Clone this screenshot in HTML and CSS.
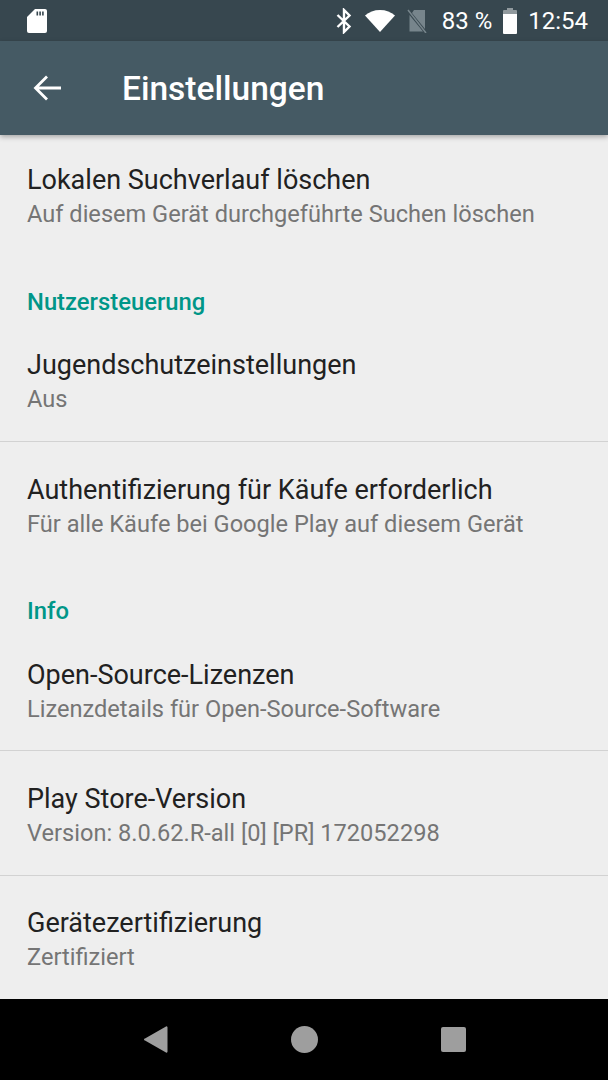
FILE: index.html
```html
<!DOCTYPE html>
<html lang="de">
<head>
  <meta charset="UTF-8" />
  <meta name="viewport" content="width=device-width, initial-scale=1.0"/>
  <title>Einstellungen</title>
  <link rel="stylesheet" href="styles.css">
</head>
<body>

  <div class="status-bar">
    <svg class="sd-icon" viewBox="0 0 20 24"><path fill="#fff" d="M8 0h10a2 2 0 0 1 2 2v20a2 2 0 0 1-2 2H2a2 2 0 0 1-2-2V8z"/><path fill="#37474f" d="M9.500 2.500h1.600v4H9.500zM12.300 2.500h1.600v4h-1.600zM15.100 2.500h1.600v4h-1.600z"/></svg>
    <div class="status-right">
      <svg class="bt-icon" viewBox="0 0 16 26"><path fill="none" stroke="#fff" stroke-width="2.400" d="M1.500 7l12 11.500L8 24V2l5.500 5.500L1.500 19"/></svg>
      <svg class="wifi-icon" viewBox="0 0 30 22"><path fill="#fff" d="M15 22L0 5.500C4 2 9 0 15 0s11 2 15 5.500z"/></svg>
      <svg class="sim-icon" viewBox="0 0 20 24"><path fill="#77858c" d="M7 1h11v19L5 4zM2.500 6L16 22.500H2.500z"/><path stroke="#77858c" stroke-width="1.500" d="M1 1l18 23"/></svg>
      <span class="battery-text">83 %</span>
      <svg class="battery-icon" viewBox="0 0 16 26"><path fill="#fff" fill-opacity="0.45" d="M5 0h6v2h3a1 1 0 0 1 1 1v3H1V3a1 1 0 0 1 1-1h3z"/><path fill="#fff" d="M1 6h14v19a1 1 0 0 1-1 1H2a1 1 0 0 1-1-1z"/></svg>
      <span class="clock">12:54</span>
    </div>
  </div>

  <header class="app-bar">
    <svg class="back-icon" viewBox="0 0 28 26"><path fill="none" stroke="#fff" stroke-width="2.800" d="M28 13H3M14 1.500L2.500 13L14 24.500"/></svg>
    <h1>Einstellungen</h1>
  </header>

  <main class="settings">
    <div class="row first">
      <div class="row-title">Lokalen Suchverlauf löschen</div>
      <div class="row-sub">Auf diesem Gerät durchgeführte Suchen löschen</div>
    </div>

    <div class="section">Nutzersteuerung</div>
    <div class="row divided">
      <div class="row-title">Jugendschutzeinstellungen</div>
      <div class="row-sub">Aus</div>
    </div>
    <div class="row low">
      <div class="row-title">Authentifizierung für Käufe erforderlich</div>
      <div class="row-sub">Für alle Käufe bei Google Play auf diesem Gerät</div>
    </div>

    <div class="section">Info</div>
    <div class="row divided low">
      <div class="row-title">Open-Source-Lizenzen</div>
      <div class="row-sub">Lizenzdetails für Open-Source-Software</div>
    </div>
    <div class="row divided tall low">
      <div class="row-title">Play Store-Version</div>
      <div class="row-sub">Version: 8.0.62.R-all [0] [PR] 172052298</div>
    </div>
    <div class="row">
      <div class="row-title">Gerätezertifizierung</div>
      <div class="row-sub">Zertifiziert</div>
    </div>
  </main>

  <nav class="nav-bar">
    <svg class="nav-back" viewBox="0 0 24 27"><path fill="#9e9e9e" d="M22 .5a1 1 0 0 1 1.500 1v24a1 1 0 0 1-1.500 1L1 14.500a1 1 0 0 1 0-2z"/></svg>
    <div class="nav-home"></div>
    <div class="nav-recent"></div>
  </nav>

</body>
</html>
```

FILE: styles.css
```css
* {
  box-sizing: border-box;
}

body {
  margin: 0;
  height: 1080px;
  display: flex;
  flex-direction: column;
  overflow: hidden;
  font-family: Roboto, sans-serif;
  background: #eeeeee;
}

.status-bar {
  height: 41px;
  flex: none;
  display: flex;
  align-items: center;
  justify-content: space-between;
  padding: 0 20px 0 27px;
  background: #37474f;
  color: #fff;
  font-size: 24px;
}

.sd-icon {
  width: 20px;
  height: 24px;
}

.status-right {
  display: flex;
  align-items: center;
}

.bt-icon {
  width: 16px;
  height: 26px;
  margin-right: 13px;
}

.wifi-icon {
  width: 30px;
  height: 22px;
  margin-right: 12px;
}

.sim-icon {
  width: 20px;
  height: 24px;
  margin-right: 15px;
}

.battery-icon {
  width: 16px;
  height: 26px;
  margin: 0 10px;
}

.app-bar {
  height: 94px;
  flex: none;
  display: flex;
  align-items: center;
  padding-left: 33px;
  background: #455a64;
  box-shadow: 0 2px 5px rgba(0, 0, 0, 0.3);
  position: relative;
}

.back-icon {
  width: 28px;
  height: 26px;
  margin-right: 61px;
}

.app-bar h1 {
  margin: 0;
  color: #fff;
  font-size: 33.500px;
  font-weight: 500;
}

.settings {
  flex: 1;
  overflow: hidden;
  background: #eeeeee;
}

.row {
  height: 124px;
  padding: 27px 27px 0;
}

.row.first {
  height: 122px;
  padding-top: 25px;
}

.row.low {
  padding-top: 28px;
}

.row.divided {
  border-bottom: 1px solid #d2d2d2;
}

.row.tall {
  height: 125px;
}

.row-title {
  font-size: 27px;
  line-height: 40px;
  color: #212121;
}

.row-sub {
  font-size: 23.600px;
  line-height: 28px;
  color: #757575;
}

.section {
  height: 61px;
  padding: 30px 27px 0;
  font-size: 23.800px;
  line-height: 30px;
  font-weight: 500;
  color: #009688;
}

.nav-bar {
  height: 81px;
  flex: none;
  display: flex;
  align-items: center;
  background: #000;
  padding: 0 0 0 144px;
}

.nav-back {
  width: 24px;
  height: 27px;
  margin-right: 123px;
}

.nav-home {
  width: 27px;
  height: 27px;
  border-radius: 50%;
  background: #9e9e9e;
  margin-right: 123px;
}

.nav-recent {
  width: 25px;
  height: 25px;
  border-radius: 2px;
  background: #9e9e9e;
}
```
